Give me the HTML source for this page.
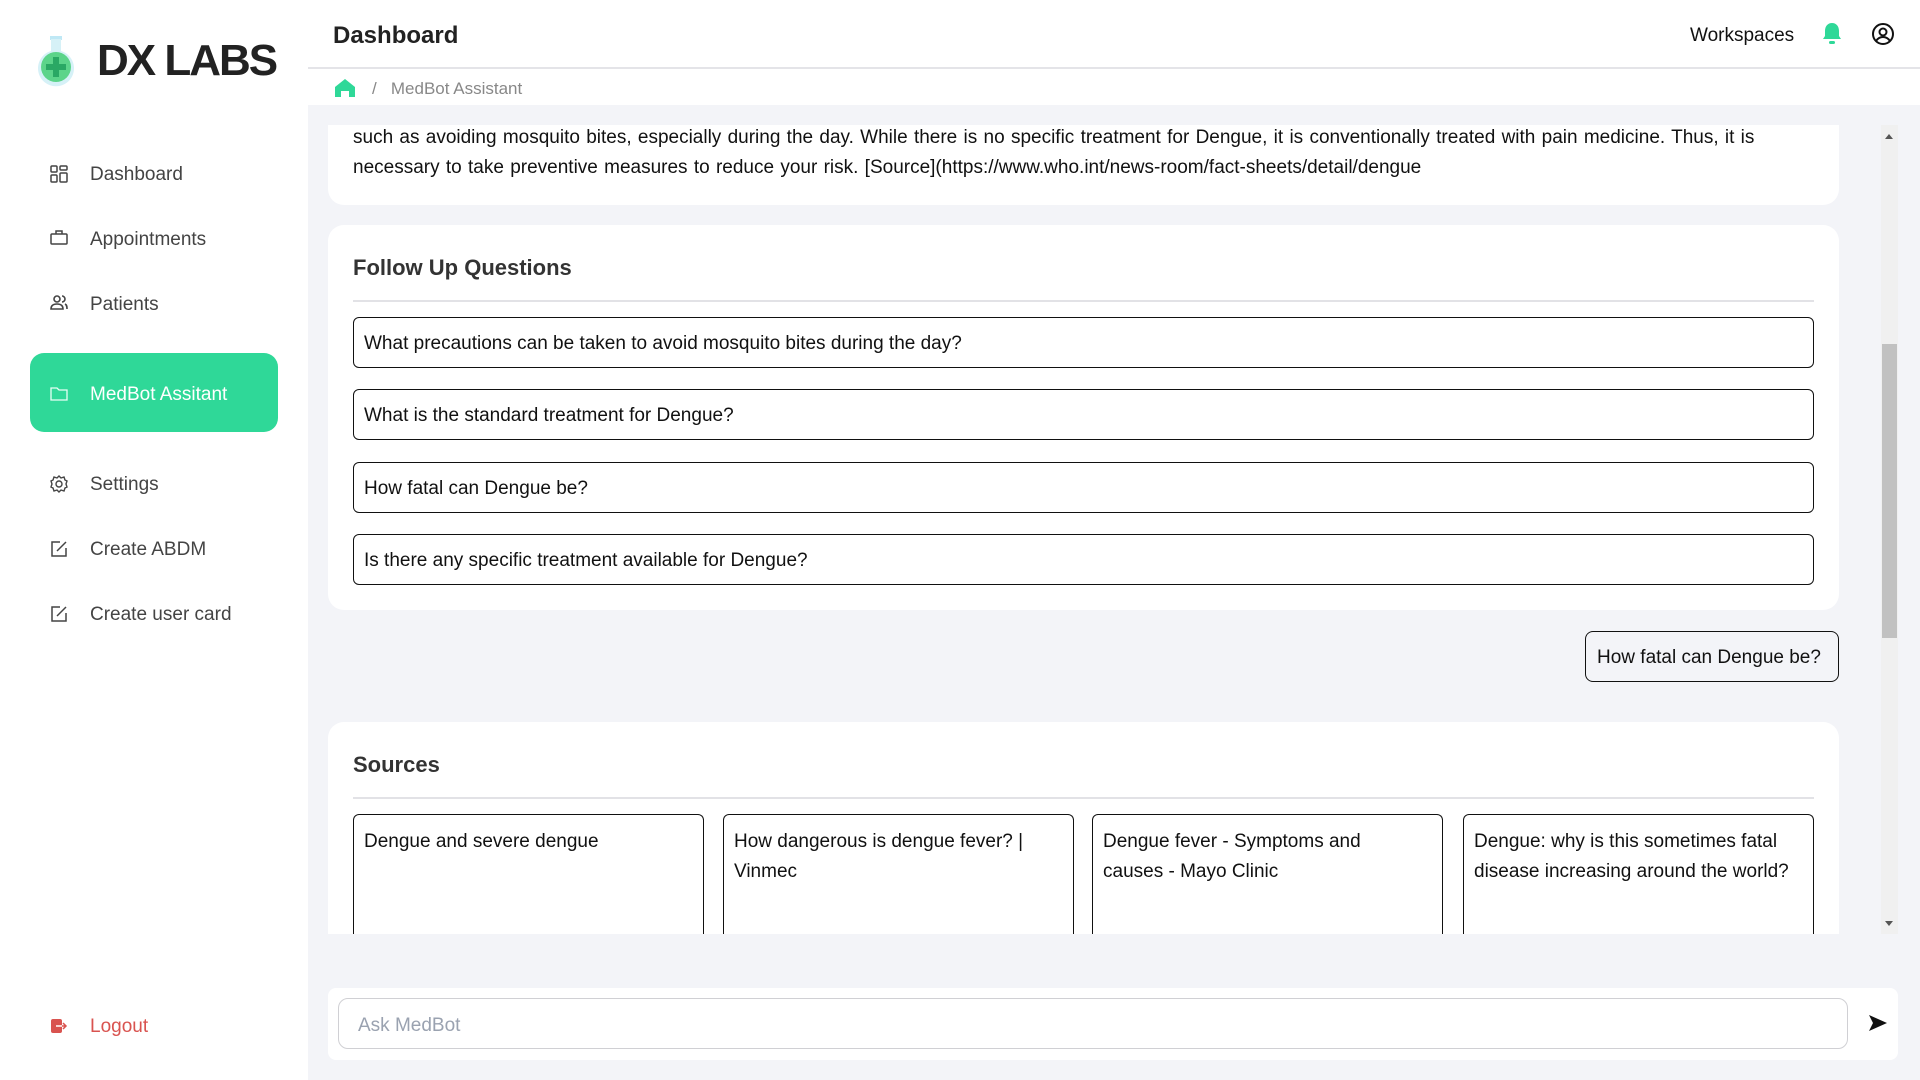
<!DOCTYPE html>
<html><head><meta charset="utf-8"><style>
*{box-sizing:border-box;margin:0;padding:0}
body{width:1920px;height:1080px;overflow:hidden;font-family:"Liberation Sans",sans-serif;background:#f3f4f8;position:relative;color:#111}
.side{position:absolute;left:0;top:0;width:308px;height:1080px;background:#fff}
.logo{position:absolute;left:97px;top:36px;font-size:44px;font-weight:bold;color:#222;letter-spacing:-2px}
.nav{position:absolute;left:90px;font-size:19px;color:#444}
.ico{position:absolute;left:50px;width:18px;height:18px}
.active{position:absolute;left:30px;top:353px;width:248px;height:79px;background:#2fd898;border-radius:14px}
.hdr{position:absolute;left:308px;top:0;width:1612px;height:69px;background:#fff;border-bottom:2px solid #e4e4e8}
.crumb{position:absolute;left:308px;top:69px;width:1612px;height:36px;background:#fff}
.card{position:absolute;left:328px;width:1511px;background:#fff;border-radius:16px}
.txt{font-size:19px;line-height:30px;color:#111}
.h{position:absolute;left:25px;font-size:22px;font-weight:bold;color:#333}
.hr{position:absolute;left:25px;width:1461px;height:2px;background:#e2e2e6}
.q{position:absolute;left:25px;width:1461px;height:51px;border:1.5px solid #111;border-radius:6px;font-size:19px;padding:15px 10px 0}
.src{position:absolute;top:92px;width:351px;height:140px;border:1.5px solid #111;border-bottom:none;border-radius:6px 6px 0 0;font-size:19px;line-height:30px;padding:12px 10px}
</style></head><body>
<div class="side">
<svg style="position:absolute;left:34px;top:34px" width="44" height="54" viewBox="0 0 44 54"><rect x="16" y="2" width="12" height="4" fill="#bfe8f5"/><path d="M17 5h10v12a18 18 0 1 1-10 0z" fill="#d6f1f7"/><circle cx="22" cy="33" r="15" fill="#5cd48a"/><rect x="19" y="23" width="6" height="20" fill="#2aa864"/><rect x="12" y="30" width="20" height="6" fill="#2aa864"/></svg>
<div class="logo">DX LABS</div>
<svg class="ico" style="top:165px" viewBox="0 0 18 18" fill="none" stroke="#444" stroke-width="1.5"><rect x="1" y="1" width="6" height="6" rx="1"/><rect x="10" y="1" width="7" height="4" rx="1"/><rect x="1" y="10" width="6" height="7" rx="1"/><rect x="10" y="8" width="7" height="9" rx="1"/></svg>
<div class="nav" style="top:164px">Dashboard</div>
<svg class="ico" style="top:229px" viewBox="0 0 18 18" fill="none" stroke="#444" stroke-width="1.5"><rect x="1" y="5" width="16" height="10" rx="1"/><path d="M6 5V2h6v3"/></svg>
<div class="nav" style="top:229px">Appointments</div>
<svg class="ico" style="top:294px" viewBox="0 0 18 18" fill="none" stroke="#444" stroke-width="1.6"><circle cx="7" cy="5" r="3"/><path d="M1 15c0-4 3-5 6-5s6 1 6 5z"/><path d="M12 2a3 3 0 0 1 0 6M15 10c2 1 2 3 2 5"/></svg>
<div class="nav" style="top:294px">Patients</div>
<div class="active"></div>
<svg class="ico" style="top:385px" viewBox="0 0 18 18" fill="none" stroke="#e8fff5" stroke-width="1.3"><path d="M1 3h6l2 2h8v10H1z"/></svg>
<div class="nav" style="top:384px;color:#fff">MedBot Assitant</div>
<svg class="ico" style="top:475px" viewBox="0 0 18 18" fill="none" stroke="#444" stroke-width="1.4"><circle cx="9" cy="9" r="3"/><path d="M9 1l2 2 3-1 1 3 2 1-1 3 1 3-2 1-1 3-3-1-2 2-2-2-3 1-1-3-2-1 1-3-1-3 2-1 1-3 3 1z"/></svg>
<div class="nav" style="top:474px">Settings</div>
<svg class="ico" style="top:540px" viewBox="0 0 18 18" fill="none" stroke="#444" stroke-width="1.5"><path d="M10 2H2v14h14V8"/><path d="M7 11l9-9"/></svg>
<div class="nav" style="top:539px">Create ABDM</div>
<svg class="ico" style="top:605px" viewBox="0 0 18 18" fill="none" stroke="#444" stroke-width="1.5"><path d="M10 2H2v14h14V8"/><path d="M7 11l9-9"/></svg>
<div class="nav" style="top:604px">Create user card</div>
<svg class="ico" style="top:1017px" viewBox="0 0 18 18"><rect x="1" y="2" width="11" height="14" rx="2" fill="#d9534f"/><path d="M6 9h10M13 6l3 3-3 3" stroke="#d9534f" stroke-width="1.5" fill="none"/><path d="M6 9h6" stroke="#fff" stroke-width="1.5"/></svg>
<div class="nav" style="top:1016px;color:#d9534f">Logout</div>
</div>
<div class="hdr">
<div style="position:absolute;left:25px;top:22px;font-size:24px;font-weight:bold;color:#222">Dashboard</div>
<div style="position:absolute;left:1382px;top:25px;font-size:19px;color:#111">Workspaces</div>
<svg style="position:absolute;left:1514px;top:22px" width="20" height="23" viewBox="0 0 20 23"><path d="M10 1c4 0 7 3 7 8v5l2 3H1l2-3V9c0-5 3-8 7-8z" fill="#2fd898"/><rect x="7" y="19" width="6" height="3" rx="1.5" fill="#2fd898"/></svg>
<svg style="position:absolute;left:1563px;top:22px" width="24" height="24" viewBox="0 0 24 24" fill="none" stroke="#111" stroke-width="2"><circle cx="12" cy="12" r="10"/><circle cx="12" cy="10" r="3.5"/><path d="M5 19c2-3 4-4 7-4s5 1 7 4"/></svg>
</div>
<div class="crumb">
<svg style="position:absolute;left:27px;top:10px" width="20" height="18" viewBox="0 0 20 18"><path d="M10 0l10 8v10h-6v-6h-8v6H0V8z" fill="#2fd898"/></svg>
<div style="position:absolute;left:64px;top:10px;font-size:17px;color:#888">/&nbsp;&nbsp;&nbsp;MedBot Assistant</div>
</div>
<div style="position:absolute;left:308px;top:125px;width:1590px;height:809px;overflow:hidden">
<div class="card" style="left:20px;top:-40px;height:120px"><div class="txt" style="position:absolute;left:25px;top:38px;width:1461px;word-spacing:1px">such as avoiding mosquito bites, especially during the day. While there is no specific treatment for Dengue, it is conventionally treated with pain medicine. Thus, it is necessary to take preventive measures to reduce your risk. [Source](https://www.who.int/news-room/fact-sheets/detail/dengue</div></div>
<div class="card" style="left:20px;top:100px;height:385px">
<div class="h" style="top:30px">Follow Up Questions</div>
<div class="hr" style="top:75px"></div>
<div class="q" style="top:92px">What precautions can be taken to avoid mosquito bites during the day?</div>
<div class="q" style="top:164px">What is the standard treatment for Dengue?</div>
<div class="q" style="top:237px">How fatal can Dengue be?</div>
<div class="q" style="top:309px">Is there any specific treatment available for Dengue?</div>
</div>
<div style="position:absolute;left:1277px;top:506px;width:254px;height:51px;border:1.5px solid #111;border-radius:8px;font-size:19px;padding:15px 11px 0;background:#f3f4f8">How fatal can Dengue be?</div>
<div class="card" style="left:20px;top:597px;height:300px">
<div class="h" style="top:30px">Sources</div>
<div class="hr" style="top:75px"></div>
<div class="src" style="left:25px">Dengue and severe dengue</div>
<div class="src" style="left:395px">How dangerous is dengue fever? | Vinmec</div>
<div class="src" style="left:764px;padding-right:40px">Dengue fever - Symptoms and causes - Mayo Clinic</div>
<div class="src" style="left:1135px">Dengue: why is this sometimes fatal disease increasing around the world?</div>
</div>
<div style="position:absolute;left:1573px;top:0;width:17px;height:809px;background:#f0f0f0"></div>
<div style="position:absolute;left:1574px;top:219px;width:15px;height:294px;background:#c1c1c1"></div>
<div style="position:absolute;left:1577px;top:9px;border:4px solid transparent;border-bottom:5px solid #555;border-top:none;width:0"></div>
<div style="position:absolute;left:1577px;top:796px;border:4px solid transparent;border-top:5px solid #555;border-bottom:none;width:0"></div>
</div>
<div style="position:absolute;left:328px;top:988px;width:1570px;height:72px;background:#fff;border-radius:8px">
<div style="position:absolute;left:10px;top:10px;width:1510px;height:51px;border:1px solid #d0d0d4;border-radius:10px;font-size:19px;color:#9aa2b0;padding:16px 19px 0">Ask MedBot</div>
<svg style="position:absolute;left:1540px;top:26px" width="20" height="18" viewBox="0 0 20 18"><path d="M1 1l18 8-18 8 4-8z" fill="#111"/></svg>
</div>
</body></html>
